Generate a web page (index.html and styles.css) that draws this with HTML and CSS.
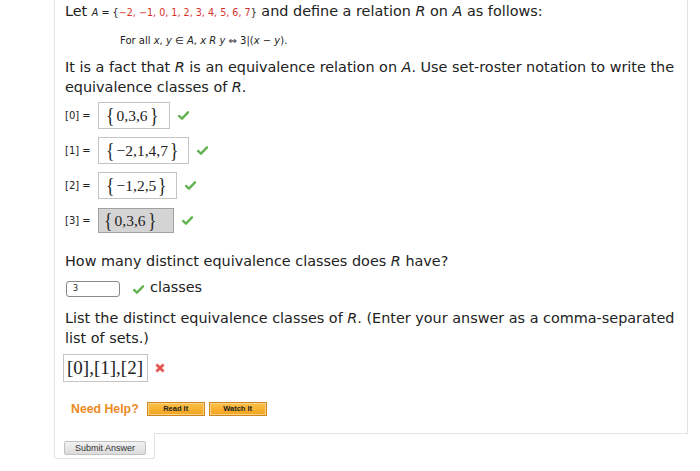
FILE: index.html
```html
<!DOCTYPE html>
<html>
<head>
<meta charset="utf-8">
<link rel="stylesheet" href="styles.css">
</head>
<body>
<div class="panel">
  <p class="intro">Let <span class="small"><i>A</i> = {<span class="red">−2, −1, 0, 1, 2, 3, 4, 5, 6, 7</span>}</span> and define a relation <i>R</i> on <i>A</i> as follows:</p>
  <p class="def">For all <i>x</i>, <i>y</i> ∈ <i>A</i>, <i>x R y</i> ⇔ 3|(<i>x</i> − <i>y</i>).</p>
  <p class="para">It is a fact that <i>R</i> is an equivalence relation on <i>A</i>. Use set-roster notation to write the equivalence classes of <i>R</i>.</p>
  <div class="rows">
    <div class="row"><span class="lbl">[0] =</span><span class="mbox"><span class="br">{</span>0,3,6<span class="br">}</span></span><svg class="check" viewBox="0 0 12 10"><path d="M1 5.5 L4.3 8.5 L11 1.5" /></svg></div>
    <div class="row"><span class="lbl">[1] =</span><span class="mbox"><span class="br">{</span>−2,1,4,7<span class="br">}</span></span><svg class="check" viewBox="0 0 12 10"><path d="M1 5.5 L4.3 8.5 L11 1.5" /></svg></div>
    <div class="row"><span class="lbl">[2] =</span><span class="mbox"><span class="br">{</span>−1,2,5<span class="br">}</span></span><svg class="check" viewBox="0 0 12 10"><path d="M1 5.5 L4.3 8.5 L11 1.5" /></svg></div>
    <div class="row"><span class="lbl">[3] =</span><span class="mbox filled"><span class="br">{</span>0,3,6<span class="br">}</span></span><svg class="check" viewBox="0 0 12 10"><path d="M1 5.5 L4.3 8.5 L11 1.5" /></svg></div>
  </div>
  <p class="q">How many distinct equivalence classes does <i>R</i> have?</p>
  <div class="numrow"><span class="num">3</span><svg class="check" viewBox="0 0 12 10"><path d="M1 5.5 L4.3 8.5 L11 1.5" /></svg><span class="unit">classes</span></div>
  <p class="q2">List the distinct equivalence classes of <i>R</i>. (Enter your answer as a comma-separated list of sets.)</p>
  <div class="ansrow"><span class="mbox ans">[0],[1],[2]</span><svg class="cross" viewBox="0 0 10 10"><path d="M1.5 1.5 L8.5 8.5 M8.5 1.5 L1.5 8.5" /></svg></div>
  <div class="help"><span class="need">Need Help?</span><span class="hbtn">Read It</span><span class="hbtn">Watch It</span></div>
</div>
<div class="tab"><span class="submit">Submit Answer</span></div>
</body>
</html>
```

FILE: styles.css
```css
html, body {
  margin: 0;
  padding: 0;
  background: #ffffff;
}
body {
  font-family: "DejaVu Sans", Verdana, sans-serif;
  color: #222;
}
p { margin: 0; }
.panel {
  margin-left: 54px;
  width: 622px;
  height: 433px;
  border: 1px solid #e4e4e4;
  border-top: none;
  padding-left: 10px;
  box-sizing: content-box;
}
.intro {
  font-size: 14.4px;
  line-height: 20px;
  padding-top: 1px;
}
.small { font-size: 9.6px; }
.red { color: #d6312b; }
.def {
  font-size: 10px;
  line-height: 14px;
  margin-top: 11px;
  padding-left: 55px;
}
.para {
  font-size: 14.4px;
  line-height: 20px;
  margin-top: 9px;
}
.rows {
  margin-top: 5px;
  display: flex;
  flex-direction: column;
  gap: 8px;
}
.row {
  display: flex;
  align-items: center;
  height: 27px;
}
.lbl {
  font-size: 10px;
  width: 33px;
}
.mbox {
  display: inline-flex;
  align-items: center;
  box-sizing: border-box;
  min-width: 72px;
  height: 27px;
  border: 1px solid #c4c4c4;
  padding: 0 7px 0 5px;
  font-family: "Liberation Serif", "Times New Roman", serif;
  font-size: 15.5px;
  color: #222;
  background: #fff;
}
.br {
  font-size: 22px;
  line-height: 1;
  transform: scaleX(0.8);
  display: inline-block;
  margin: -2px 1px 0;
}
.mbox.filled {
  background: #d4d4d4;
  border-color: #a0a0a0;
  height: 25px;
  min-width: 76px;
  padding-left: 3px;
}
.check {
  width: 11px;
  height: 9px;
  margin-left: 8px;
  fill: none;
  stroke: #62b24f;
  stroke-width: 2.6;
  stroke-linecap: round;
  stroke-linejoin: round;
}
.q {
  font-size: 14.4px;
  line-height: 20px;
  margin-top: 17px;
}
.numrow {
  display: flex;
  align-items: center;
  margin-top: 8px;
  height: 20px;
}
.num {
  width: 46px;
  height: 14px;
  border: 1px solid #8a8a8a;
  border-radius: 3px;
  font-size: 8px;
  line-height: 14px;
  padding-left: 6px;
  margin-left: 1px;
}
.numrow .check { margin-left: 13px; }
.unit {
  font-size: 14.4px;
  margin-left: 6px;
  margin-top: -4px;
}
.q2 {
  font-size: 14.4px;
  line-height: 19.5px;
  margin-top: 10px;
}
.ansrow {
  display: flex;
  align-items: center;
  margin-top: 6px;
}
.mbox.ans {
  min-width: 0;
  height: 28px;
  padding: 0 4px 0 3px;
  font-size: 19px;
  margin-left: -2px;
}
.cross {
  width: 10px;
  height: 10px;
  margin-left: 7px;
  fill: none;
  stroke: #e2534b;
  stroke-width: 2.8;
}
.help {
  display: flex;
  align-items: center;
  margin-top: 20px;
  padding-left: 6px;
}
.need {
  color: #ec8a1f;
  font-family: "Liberation Sans", Arial, sans-serif;
  font-weight: bold;
  font-size: 12.3px;
  margin-right: 8px;
}
.hbtn {
  display: inline-block;
  width: 56px;
  height: 12px;
  border: 1px solid #d0841e;
  background: linear-gradient(#fbc24a, #f4a21c);
  box-shadow: inset 0 0 0 1px #f9d488;
  font-family: "Liberation Sans", Arial, sans-serif;
  font-weight: bold;
  font-size: 7.5px;
  line-height: 12px;
  text-align: center;
  color: #222;
  margin-right: 4px;
}
.tab {
  margin-left: 54px;
  margin-top: -1px;
  width: 101px;
  height: 26px;
  border: 1px solid #e4e4e4;
  border-top: none;
  border-radius: 0 0 3px 3px;
  background: #fff;
  padding-top: 8px;
  box-sizing: border-box;
}
.submit {
  display: block;
  margin-left: 9px;
  width: 80px;
  height: 12px;
  border: 1px solid #c2c2c2;
  border-radius: 2px;
  background: linear-gradient(#f2f2f2, #dcdcdc);
  font-family: "Liberation Sans", Arial, sans-serif;
  font-size: 9px;
  line-height: 12px;
  text-align: center;
  color: #333;
}
```
